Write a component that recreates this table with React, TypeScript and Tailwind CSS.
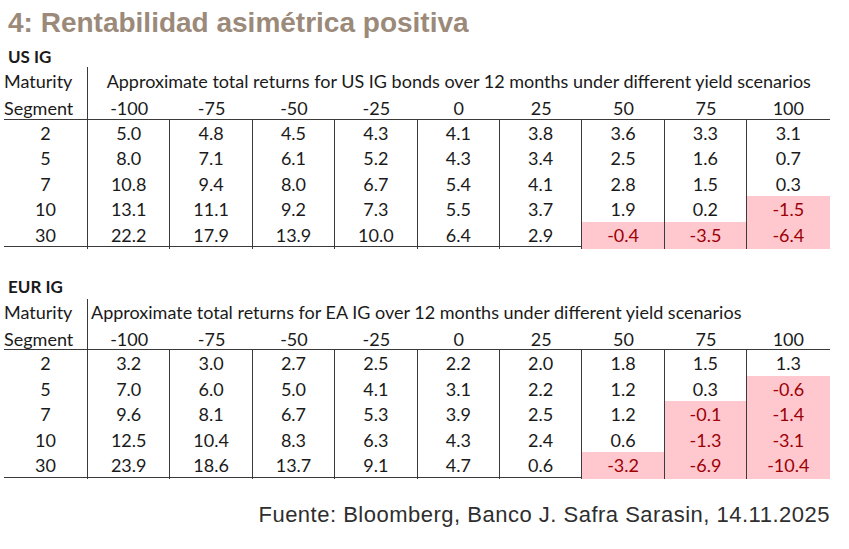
const US_ROWS: { m: string; v: string[] }[] = [
  { m: '2', v: ['5.0', '4.8', '4.5', '4.3', '4.1', '3.8', '3.6', '3.3', '3.1'] },
  { m: '5', v: ['8.0', '7.1', '6.1', '5.2', '4.3', '3.4', '2.5', '1.6', '0.7'] },
  { m: '7', v: ['10.8', '9.4', '8.0', '6.7', '5.4', '4.1', '2.8', '1.5', '0.3'] },
  { m: '10', v: ['13.1', '11.1', '9.2', '7.3', '5.5', '3.7', '1.9', '0.2', '-1.5'] },
  { m: '30', v: ['22.2', '17.9', '13.9', '10.0', '6.4', '2.9', '-0.4', '-3.5', '-6.4'] },
]

const EUR_ROWS: { m: string; v: string[] }[] = [
  { m: '2', v: ['3.2', '3.0', '2.7', '2.5', '2.2', '2.0', '1.8', '1.5', '1.3'] },
  { m: '5', v: ['7.0', '6.0', '5.0', '4.1', '3.1', '2.2', '1.2', '0.3', '-0.6'] },
  { m: '7', v: ['9.6', '8.1', '6.7', '5.3', '3.9', '2.5', '1.2', '-0.1', '-1.4'] },
  { m: '10', v: ['12.5', '10.4', '8.3', '6.3', '4.3', '2.4', '0.6', '-1.3', '-3.1'] },
  { m: '30', v: ['23.9', '18.6', '13.7', '9.1', '4.7', '0.6', '-3.2', '-6.9', '-10.4'] },
]

const SCENARIOS = ['-100', '-75', '-50', '-25', '0', '25', '50', '75', '100']

const GRID = 'grid grid-cols-[84px_repeat(9,82.4px)]'

function ReturnsTable({
  label,
  caption,
  centered,
  rows,
  rowH,
  first,
}: {
  label: string
  caption: string
  centered: boolean
  rows: { m: string; v: string[] }[]
  rowH: string
  first: boolean
}) {
  return (
    <div className={first ? '' : 'mt-[23px]'}>
      <div className={`pl-[4px] font-bold text-[17px] leading-[20px] pt-[7px] ${first ? 'h-[27px]' : 'h-[29px]'}`}>
        {label}
      </div>
      <div className="w-[826px]">
        <div className={`${GRID} ${first ? 'h-[28px]' : 'h-[27px]'}`}>
          <div className="border-r border-[#3a3a3a] flex items-center">Maturity</div>
          <div
            className={`col-span-9 flex items-center whitespace-nowrap ${centered ? 'justify-center' : 'pl-[3px]'}`}
          >
            {caption}
          </div>
        </div>
        <div className={`${GRID} ${first ? 'h-[25px]' : 'h-[24px]'} border-b border-[#3a3a3a]`}>
          <div className="border-r border-[#3a3a3a] flex items-center">Segment</div>
          {SCENARIOS.map((s) => (
            <div key={s} className="flex items-center justify-center">
              {s}
            </div>
          ))}
        </div>
        {rows.map((r, ri) => (
          <div
            key={r.m}
            className={`${GRID} ${rowH} ${ri === rows.length - 1 ? 'border-b border-[#3a3a3a]' : ''}`}
          >
            <div className="border-r border-[#3a3a3a] flex items-center justify-center">{r.m}</div>
            {r.v.map((v, i) => {
              const neg = v.startsWith('-')
              return (
                <div
                  key={i}
                  className={`flex items-center justify-center ${i < 8 ? 'border-r border-[#3a3a3a]' : ''} ${
                    neg ? 'bg-[#ffc7ce] text-[#9c0006]' : ''
                  }`}
                >
                  {v}
                </div>
              )
            })}
          </div>
        ))}
      </div>
    </div>
  )
}

export default function App() {
  return (
    <div className="w-[849px] h-[549px] bg-white text-[#1a1a1a] font-['Lato',sans-serif] text-[18px] overflow-hidden">
      <div className="pl-[8px] pt-[5px] h-[40px] leading-[36px] text-[28px] font-bold text-[#9b8a7a] font-['Liberation_Sans',Arial,sans-serif] whitespace-nowrap">
        4: Rentabilidad asimétrica positiva
      </div>
      <div className="pl-[4px]">
        <ReturnsTable
          label="US IG"
          caption="Approximate total returns for US IG bonds over 12 months under different yield scenarios"
          centered
          rows={US_ROWS}
          rowH="h-[25.4px]"
          first
        />
        <ReturnsTable
          label="EUR IG"
          caption="Approximate total returns for EA IG over 12 months under different yield scenarios"
          centered={false}
          rows={EUR_ROWS}
          rowH="h-[25.6px]"
          first={false}
        />
      </div>
      <div className="mt-[23px] pr-[19px] text-right text-[22px] leading-[28px] tracking-[0.5px] text-[#2e2e2e] font-['Liberation_Sans',Arial,sans-serif] whitespace-nowrap">
        Fuente: Bloomberg, Banco J. Safra Sarasin, 14.11.2025
      </div>
    </div>
  )
}
